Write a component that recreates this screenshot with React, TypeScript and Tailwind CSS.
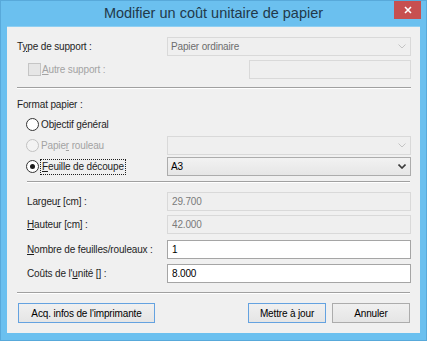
import React from 'react';

const font = { fontFamily: '"Liberation Sans", Arial, sans-serif' };

const Chevron: React.FC<{ disabled?: boolean }> = ({ disabled }) => (
  <svg width="8" height="5" viewBox="0 0 8 5" className="mr-[4px]">
    <path
      d="M0.5 0.5 L4 4 L7.5 0.5"
      fill="none"
      stroke={disabled ? '#c4c4c4' : '#3a3a3a'}
      strokeWidth={disabled ? 1 : 1.6}
    />
  </svg>
);

const Select: React.FC<{ value?: string; disabled?: boolean; className?: string }> = ({ value, disabled, className }) => (
  <div
    className={`flex items-center justify-between h-[19px] pl-[3px] border ${
      disabled
        ? 'border-[#d9d9d9] bg-[#efefef] text-[#6d6d6d]'
        : 'border-[#acacac] bg-gradient-to-b from-[#f2f2f2] to-[#e6e6e6] text-black'
    } ${className ?? 'w-[244px]'}`}
  >
    <span className="leading-none">{value}</span>
    <Chevron disabled={disabled} />
  </div>
);

const Field: React.FC<{ value?: string; disabled?: boolean; className?: string }> = ({ value, disabled, className }) => (
  <div
    className={`flex items-center h-[19px] pl-[4px] border ${
      disabled ? 'border-[#d9d9d9] bg-[#efefef] text-[#7a7a7a]' : 'border-[#a5a5a5] bg-white text-black'
    } ${className ?? 'w-[244px]'}`}
  >
    <span className="leading-none">{value}</span>
  </div>
);

const Radio: React.FC<{ checked?: boolean; disabled?: boolean }> = ({ checked, disabled }) => (
  <div
    className={`w-[13px] h-[13px] rounded-full border flex items-center justify-center shrink-0 ${
      disabled ? 'border-[#c2c2c2] bg-[#f3f3f3]' : 'border-[#333333] bg-white'
    }`}
  >
    {checked && <div className="w-[5px] h-[5px] rounded-full bg-[#1a1a1a]" />}
  </div>
);

const Separator: React.FC<{ className?: string }> = ({ className }) => (
  <div className={`h-[2px] border-t border-[#a0a0a0] border-b border-b-white ${className ?? ''}`} />
);

const Button: React.FC<{ label: string; blue?: boolean; className?: string }> = ({ label, blue, className }) => (
  <div
    className={`h-[20px] flex items-center justify-center border bg-gradient-to-b from-[#f0f0f0] to-[#e5e5e5] text-black ${
      blue ? 'border-[#64a2e0]' : 'border-[#acacac]'
    } ${className ?? ''}`}
  >
    {label}
  </div>
);

export default function App() {
  return (
    <div
      className="w-[427px] h-[341px] bg-[#6bc0ef] border border-[#58a9da] flex flex-col text-[10px] tracking-[-0.15px] text-[#1e1e1e]"
      style={font}
    >
      {/* title bar */}
      <div className="h-[25px] grid grid-cols-[1fr_auto_1fr] items-start">
        <div />
        <div className="text-[14.5px] tracking-normal text-[#22394a] pt-[4px] leading-[17px]">
          Modifier un coût unitaire de papier
        </div>
        <div className="flex justify-end pr-[5px]">
          <div className="w-[27px] h-[18px] bg-[#c75050] flex items-center justify-center">
            <svg width="8" height="8" viewBox="0 0 8 8">
              <path d="M1 1 L7 7 M7 1 L1 7" stroke="white" strokeWidth="1.6" />
            </svg>
          </div>
        </div>
      </div>

      {/* client area */}
      <div className="mx-[6px] h-[307px] bg-[#f0f0f0] border-t border-[#8fcff2] pl-[10px] pr-[9px] flex flex-col">
        <div className="mt-[10px] h-[19px] flex items-center">
          <div className="flex-1">
            T<span className="underline">y</span>pe de support :
          </div>
          <Select value="Papier ordinaire" disabled />
        </div>

        <div className="mt-[4px] h-[19px] flex items-center">
          <div className="flex-1 flex items-center pl-[11px] gap-[1px] text-[#a3a3a3]">
            <div className="w-[13px] h-[13px] border border-[#c5c5c5] bg-[#e6e6e6]" />
            <span>
              <span className="underline">A</span>utre support :
            </span>
          </div>
          <Field disabled className="w-[162px]" />
        </div>

        <Separator className="mt-[8px]" />

        <div className="mt-[7px] h-[16px] flex items-center">Format papier :</div>

        <div className="mt-[3px] h-[19px] flex items-center pl-[9px] gap-[2px]">
          <Radio />
          <span>
            Objectif <span className="underline">g</span>énéral
          </span>
        </div>

        <div className="mt-[2px] h-[19px] flex items-center">
          <div className="flex-1 flex items-center pl-[9px] gap-[2px] text-[#a3a3a3]">
            <Radio disabled />
            <span>
              Papie<span className="underline">r</span> rouleau
            </span>
          </div>
          <Select disabled />
        </div>

        <div className="mt-[2px] h-[19px] flex items-center">
          <div className="flex-1 flex items-center pl-[9px] gap-[2px]">
            <Radio checked />
            <span className="outline outline-1 outline-dotted outline-[#202020] px-[1px] leading-[14px]">
              <span className="underline">F</span>euille de découpe
            </span>
          </div>
          <Select value="A3" />
        </div>

        <Separator className="mt-[5px] ml-[10px] mr-[1px]" />

        <div className="mt-[9px] h-[19px] flex items-center">
          <div className="flex-1 pl-[10px]">
            Largeu<span className="underline">r</span> [cm] :
          </div>
          <Field value="29.700" disabled />
        </div>

        <div className="mt-[4px] h-[19px] flex items-center">
          <div className="flex-1 pl-[10px]">
            <span className="underline">H</span>auteur [cm] :
          </div>
          <Field value="42.000" disabled />
        </div>

        <div className="mt-[6px] h-[19px] flex items-center">
          <div className="flex-1 pl-[10px]">
            <span className="underline">N</span>ombre de feuilles/rouleaux :
          </div>
          <Field value="1" />
        </div>

        <div className="mt-[5px] h-[19px] flex items-center">
          <div className="flex-1 pl-[10px]">
            Coûts de l'<span className="underline">u</span>nité [] :
          </div>
          <Field value="8.000" />
        </div>

        <Separator className="mt-[9px] mr-[1px]" />

        <div className="mt-[9px] flex items-center pl-[1px] pr-[1px]">
          <Button label="Acq. infos de l'imprimante" blue className="w-[137px]" />
          <div className="flex-1" />
          <Button label="Mettre à jour" blue className="w-[78px]" />
          <Button label="Annuler" className="w-[78px] ml-[6px]" />
        </div>
      </div>
    </div>
  );
}
